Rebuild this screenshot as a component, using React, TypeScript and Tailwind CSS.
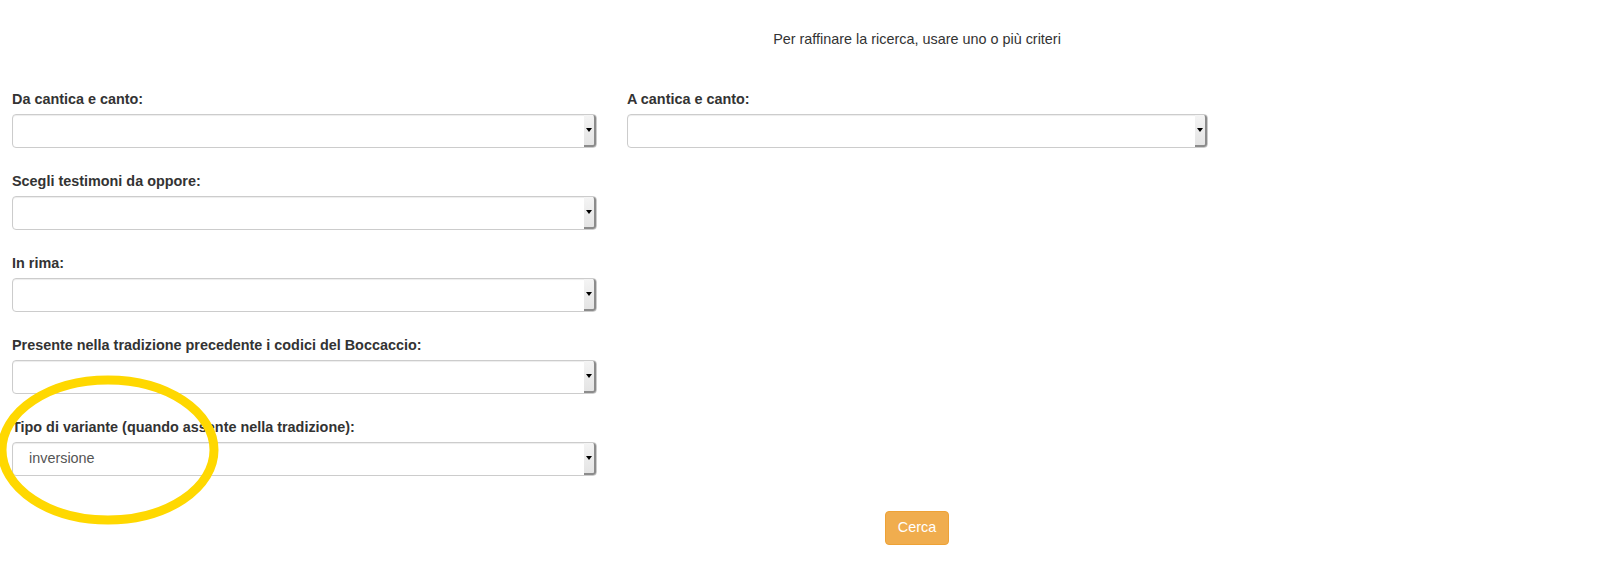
import React from "react";

const font = { fontFamily: '"Liberation Sans", Arial, Helvetica, sans-serif' };

interface SelectBoxProps {
  value?: string;
  width: string;
}

function SelectBox({ value, width }: SelectBoxProps) {
  return (
    <div
      className={`flex h-[34px] ${width} rounded-[4px] border border-[#cccccc] bg-white shadow-[inset_0_1px_1px_rgba(0,0,0,0.075)]`}
    >
      <div className="flex flex-1 items-center pl-[16px] text-[14.4px] text-[#555555]">{value}</div>
      {/* native dropdown button */}
      <div className="flex w-[12px] items-center justify-center rounded-r-[3px] border-r-2 border-b-2 border-[#8c8c8c] bg-gradient-to-b from-[#f4f4f4] to-[#e4e4e4]">
        <div className="h-0 w-0 border-x-[3px] border-t-[4px] border-x-transparent border-t-black" />
      </div>
    </div>
  );
}

function Field({ label, value, width = "w-[585px]" }: { label: string; value?: string; width?: string }) {
  return (
    <div className="flex flex-col">
      <label className="mb-[5px] text-[14.4px] leading-[20px] font-bold text-[#333333]">{label}</label>
      <SelectBox value={value} width={width} />
    </div>
  );
}

export default function App() {
  return (
    <div className="relative min-h-[587px] w-[1624px] bg-white text-[#333333]" style={font}>
      {/* Intro */}
      <div className="pt-[29px] pl-[210px] text-center text-[14.4px] leading-[20px]">
        Per raffinare la ricerca, usare uno o più criteri
      </div>

      {/* Form */}
      <div className="mt-[40px] flex flex-col gap-[23px] pl-[12px]">
        <div className="flex gap-[30px]">
          <Field label="Da cantica e canto:" />
          <Field label="A cantica e canto:" width="w-[581px]" />
        </div>
        <Field label="Scegli testimoni da oppore:" />
        <Field label="In rima:" />
        <Field label="Presente nella tradizione precedente i codici del Boccaccio:" />
        <Field label="Tipo di variante (quando assente nella tradizione):" value="inversione" />
      </div>

      <div className="mt-[35px] flex justify-center pl-[210px]">
        <button className="h-[34px] w-[64px] rounded-[4px] border border-[#eea236] bg-[#f0ad4e] text-[14.4px] text-white">
          Cerca
        </button>
      </div>

      {/* annotation circle */}
      <svg className="pointer-events-none absolute left-0 top-0" width="1624" height="587">
        <ellipse cx="108" cy="450" rx="106" ry="70" fill="none" stroke="#ffd800" strokeWidth="9" />
      </svg>
    </div>
  );
}
